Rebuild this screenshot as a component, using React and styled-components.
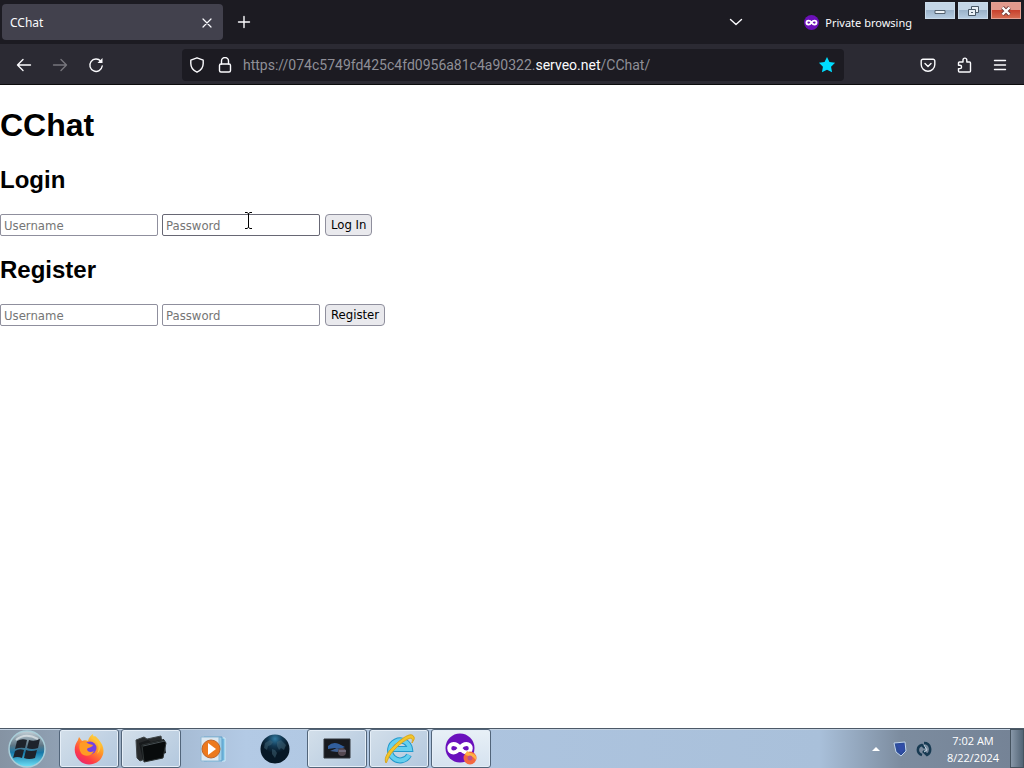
import React from "react";
import styled, { createGlobalStyle, css } from "styled-components";

const chromeFont = '"Noto Sans", "Open Sans", sans-serif';
const formFont = '"DejaVu Sans Condensed", "DejaVu Sans", sans-serif';

const GlobalStyle = createGlobalStyle`
  *, *::before, *::after { box-sizing: border-box; }
  body { margin: 0; background: #fff; }
  button { margin: 0; padding: 0; }
`;

const Screen = styled.div`
  display: flex;
  flex-direction: column;
  min-height: 100vh;
  position: relative;
`;

const TabStrip = styled.header`
  display: flex;
  align-items: center;
  height: 44px;
  padding-left: 2px;
  background: #1c1b22;
  color: #fbfbfe;
  font: 12px/18px ${chromeFont};
`;

const Tab = styled.div`
  display: flex;
  align-items: center;
  justify-content: space-between;
  width: 221px;
  height: 36px;
  padding: 1px 4px 0 8px;
  border-radius: 4px;
  background: #42414d;
`;

const IconButton = styled.button`
  display: flex;
  align-items: center;
  justify-content: center;
  flex: none;
  width: ${(p) => p.$width || 36}px;
  height: 32px;
  border: 0;
  background: none;
  color: ${(p) => (p.disabled ? "#77767d" : "#fbfbfe")};
`;

const Spacer = styled.div`
  flex: 1;
`;

const PrivateBadge = styled.div`
  display: flex;
  align-items: center;
  gap: 6px;
  margin-left: 56px;
  padding: 1px 112px 0 0;
  font-size: 11px;
  white-space: nowrap;
`;

const WindowControls = styled.div`
  position: absolute;
  top: 2px;
  right: 3px;
  display: flex;
  gap: 3px;
`;

const WindowButton = styled.button`
  display: flex;
  align-items: center;
  justify-content: center;
  width: 30px;
  height: 17px;
  border: 1px solid ${(p) => (p.$close ? "#e3a093" : "#c9dbea")};
  background: ${(p) =>
    p.$close
      ? "linear-gradient(#e39a8d 0 45%, #c8422e 50%, #d66a50)"
      : "linear-gradient(#c3d5e6 0 45%, #9bb3ca 50%, #b5cbe0)"};
`;

const Toolbar = styled.nav`
  display: flex;
  align-items: center;
  height: 41px;
  padding: 1px 6px 0;
  border-bottom: 1px solid #0c0c0d;
  background: #2b2a33;
`;

const AddressBar = styled.div`
  display: flex;
  align-items: center;
  flex: 1;
  min-width: 0;
  height: 32px;
  margin: 0 66px 0 68px;
  padding: 0 4px 0 1px;
  border-radius: 4px;
  background: #1c1b22;
`;

const Address = styled.div`
  flex: 1;
  min-width: 0;
  margin-left: 4px;
  overflow: hidden;
  white-space: nowrap;
  color: #8f8f97;
  font: 14px/20px Roboto, ${chromeFont};
`;

const Host = styled.span`
  color: #fbfbfe;
`;

const Page = styled.main`
  flex: 1;
  background: #fff;
  color: #000;
  font-family: "Liberation Sans", Arial, sans-serif;
`;

const Title = styled.h1`
  margin: 22px 0;
  font-size: 32px;
  line-height: 37px;
`;

const Heading = styled.h2`
  margin: 20px 0;
  font-size: 24px;
  line-height: 28px;
`;

const Form = styled.form`
  display: flex;
  gap: 4px;
`;

const controlText = css`
  height: 22px;
  font: 13px/16px ${formFont};
`;

const Field = styled.input`
  ${controlText}
  width: 158px;
  margin: 0;
  padding: 1px 3px;
  border: 1px solid ${(p) => (p.$hovered ? "#676774" : "#8f8f9d")};
  border-radius: 2px;
  background: #fff;
  color: #000;
  &::placeholder { color: #757575; opacity: 1; }
`;

const Submit = styled.button`
  ${controlText}
  margin-left: 1px;
  padding: 0 5px;
  border: 1px solid #8f8f9d;
  border-radius: 4px;
  background: #e9e9ed;
  color: #000;
`;

const TextCursor = styled.svg`
  position: absolute;
  left: 244px;
  top: 212px;
  pointer-events: none;
`;

const Taskbar = styled.footer`
  display: flex;
  align-items: center;
  height: 40px;
  border-top: 1px solid #4c5967;
  background: linear-gradient(90deg, #8593a3 0, #a3b8d0 16%, #b3cae5 24%, #adc4df 45%, #a9c0da 80%, #7c8c9f 88%, #748295);
  box-shadow: inset 0 1px 0 #c3d2e2;
`;

const StartButton = styled.button`
  display: flex;
  justify-content: center;
  width: 54px;
  margin-right: 5px;
  border: 0;
  background: none;
`;

const TaskList = styled.div`
  display: flex;
  gap: 2px;
  height: 39px;
`;

const TaskButton = styled.button`
  display: flex;
  align-items: center;
  justify-content: center;
  width: 60px;
  border: 1px solid transparent;
  border-radius: 3px;
  background: none;
  ${(p) =>
    p.$open &&
    css`
      border-color: #52657a;
      background: ${p.$active ? "linear-gradient(#e8f0f7, #d5e2ef)" : "linear-gradient(135deg, #d3dfea, #b3c8de)"};
      box-shadow: inset 0 0 0 1px #e5eef7;
    `}
`;

const Tray = styled.div`
  display: flex;
  align-items: center;
  height: 39px;
`;

const TrayButton = styled(IconButton)`
  width: 24px;
`;

const Clock = styled.time`
  width: 74px;
  color: #fff;
  text-align: center;
  font: 11px/17px "Open Sans", "Noto Sans", sans-serif;
`;

const ShowDesktop = styled.button`
  width: 14px;
  height: 39px;
  border: 1px solid #45535f;
  background: linear-gradient(90deg, #8797a8, #526475);
`;

const Icon = ({ size = 16, width = 1.4, children }) => (
  <svg width={size} height={size} viewBox="0 0 16 16" fill="none" stroke="currentColor" strokeWidth={width} strokeLinecap="round" strokeLinejoin="round" aria-hidden="true">
    {children}
  </svg>
);

const Mask = ({ size }) => (
  <svg width={size} height={size} viewBox="0 0 32 32" aria-hidden="true">
    <circle cx="16" cy="16" r="16" fill="#6b10b8" />
    <path fill="none" stroke="#fff" strokeWidth="4" d="M16 16c-2-3-4-4-6.500-4a4 4 0 0 0 0 8.500c2.500 0 4.500-1.500 6.500-4.500 2-3 4-4 6.500-4a4 4 0 0 1 0 8.500c-2.500 0-4.500-1.500-6.500-4.500z" />
  </svg>
);

const StartIcon = () => (
  <svg width="40" height="38" viewBox="0 0 40 38" aria-hidden="true">
    <defs>
      <linearGradient id="orb" x1="0" y1="0" x2="0" y2="1">
        <stop offset="0" stopColor="#c5d1d8" /><stop offset=".4" stopColor="#5d7584" />
        <stop offset=".6" stopColor="#1678a8" /><stop offset="1" stopColor="#6fe2f8" />
      </linearGradient>
    </defs>
    <circle cx="20" cy="19" r="18" fill="url(#orb)" stroke="#a9ced9" strokeWidth="1.500" />
    <path fill="#1d222b" d="M10 11q5-3 10-1l-2 8q-5-1-10 1zM22 10q5 2 11-1l-2 9q-6 2-11 0zM8 21q4-3 9-1l-2 8q-5-2-9 0zM19 20q5 2 11 0l-2 8q-6 2-11 0z" />
    <path d="M9 10Q18 2 31 9" stroke="#e4eaec" strokeWidth="2" fill="none" opacity=".7" />
  </svg>
);

const FirefoxIcon = () => (
  <svg width="32" height="32" viewBox="0 0 32 32" aria-hidden="true">
    <defs>
      <linearGradient id="fire" x1=".9" y1="0" x2=".2" y2="1">
        <stop offset="0" stopColor="#fff04a" /><stop offset=".4" stopColor="#ff9a27" />
        <stop offset=".75" stopColor="#ff3c45" /><stop offset="1" stopColor="#e52378" />
      </linearGradient>
    </defs>
    <path fill="url(#fire)" d="M5 7l1-3 3 4c2-1 4-1 6 0 1-4 3-6 5-7 0 3 3 4 4 7l1-2c7 7 7 15 2 21-6 6-16 6-21 0C1 22 0 14 5 7z" />
    <circle cx="17" cy="15" r="6.500" fill="#7543e3" />
    <path fill="#ff9b24" d="M7 10c3-2 6-1 9 1l4 1c-1 3-5 2-6 4 0 3 4 4 7 2-3 6-10 6-13 2-2-3-2-7-1-10z" />
    <path fill="#ffc53a" d="M18 5c6 3 10 8 6 16 6-5 4-14-2-18z" />
  </svg>
);

const FoldersIcon = () => (
  <svg width="34" height="32" viewBox="0 0 34 32" aria-hidden="true">
    <path fill="#272a2c" stroke="#3f4547" d="M2 7l8-3 3 2 14-3 2 16-23 9-3-3z" />
    <path fill="#171a1c" d="M5 10l9-3 3 2 13-3 2 14-23 7z" />
    <path fill="#080b0c" stroke="#2d3334" d="M8 12l22-5 2 3-3 15-19 4z" />
    <path stroke="#485054" d="M9 13l22-5" />
  </svg>
);

const MediaIcon = () => (
  <svg width="28" height="28" viewBox="0 0 28 28" aria-hidden="true">
    <path fill="#71b7dd" stroke="#d0eefa" d="M8 3h18v23H8z" />
    <path fill="#9fcfe8" stroke="#5e9fc9" d="M5 2h18v24H5z" />
    <path fill="#dce8f1" stroke="#8fb9d5" d="M2 2h18v24H2z" />
    <circle cx="12" cy="14" r="9" fill="#ec791d" stroke="#bd652b" />
    <path d="M9 8l8 6-8 6z" fill="#fff" />
  </svg>
);

const GlobeIcon = () => (
  <svg width="30" height="30" viewBox="0 0 30 30" aria-hidden="true">
    <defs><radialGradient id="globe" cx=".5" cy=".15"><stop stopColor="#2f79a0" /><stop offset=".5" stopColor="#123852" /><stop offset="1" stopColor="#071826" /></radialGradient></defs>
    <circle cx="15" cy="15" r="14.500" fill="url(#globe)" />
    <path fill="#426578" opacity=".5" d="M5 9l5-3 3 2-2 3-3 1-1 4-3-2zm7 6l3 1 2 3-2 5-3-4zm5-7l4-2 5 5-2 5-3-2-2 2-2-4z" />
  </svg>
);

const MonitorIcon = () => (
  <svg width="28" height="24" viewBox="0 0 28 24" aria-hidden="true">
    <path fill="#17191e" stroke="#30343b" d="M1 2h26v19H1z" />
    <path fill="#315e9d" d="M5 9q5-5 11-2l6 3q-5 3-10 1l-7 1z" />
    <path fill="#3f5f90" d="M7 14l7-3 4 3-4 1z" />
    <circle cx="19" cy="15" r="4" fill="#554952" /><path d="M16 14h7" stroke="#8c89a0" />
  </svg>
);

const ExplorerIcon = () => (
  <svg width="32" height="32" viewBox="0 0 32 32" fill="none" aria-hidden="true">
    <path d="M26 22a10 10 0 1 1 1-6H10" stroke="#2299cc" strokeWidth="6" />
    <path d="M26 22a10 10 0 1 1 1-6H10" stroke="#66cfee" strokeWidth="4" />
    <path d="M3 30C0 25 6 17 14 10S29-1 31 4c1 2-1 4-2 6 1-4 0-6-4-4-7 3-18 14-20 20-1 2-1 3-2 4z" fill="#f2c62b" stroke="#d9a51f" />
  </svg>
);

const PrivateIcon = () => (
  <svg width="32" height="32" viewBox="0 0 32 32" aria-hidden="true">
    <circle cx="15" cy="15" r="14.500" fill="#6a10bd" />
    <path fill="none" stroke="#fff" strokeWidth="4" d="M15 15c-2-3-4-4-6.500-4a4 4 0 0 0 0 8.500c2.500 0 4.500-1.500 6.500-4.500 2-3 4-4 6.500-4a4 4 0 0 1 0 8.500c-2.500 0-4.500-1.500-6.500-4.500z" />
    <circle cx="25" cy="25" r="6.500" fill="#f46840" /><path d="M20 22l2-4 3 2c5 0 7 4 6 7l-3-3z" fill="#ffb340" /><circle cx="25" cy="25" r="2.500" fill="#bd518b" />
  </svg>
);

const tasks = [
  { name: "Firefox", icon: FirefoxIcon, open: true },
  { name: "Folders", icon: FoldersIcon, open: true },
  { name: "Media player", icon: MediaIcon },
  { name: "Globe", icon: GlobeIcon },
  { name: "Monitor", icon: MonitorIcon, open: true },
  { name: "Internet Explorer", icon: ExplorerIcon, open: true },
  { name: "Firefox private browsing", icon: PrivateIcon, open: true, active: true },
];

const Credentials = ({ action, hovered }) => (
  <Form onSubmit={(e) => e.preventDefault()}>
    <Field type="text" placeholder="Username" aria-label="Username" />
    <Field type="password" placeholder="Password" aria-label="Password" $hovered={hovered} />
    <Submit type="submit">{action}</Submit>
  </Form>
);

export default function App() {
  return (
    <Screen>
      <GlobalStyle />
      <TabStrip>
        <Tab>
          <span>CChat</span>
          <IconButton $width={24} aria-label="Close tab"><Icon width={1.2}><path d="M4 4l8 8M12 4l-8 8" /></Icon></IconButton>
        </Tab>
        <IconButton $width={42} aria-label="New tab"><Icon><path d="M8 2.500v11M2.500 8h11" /></Icon></IconButton>
        <Spacer />
        <IconButton $width={24} aria-label="List all tabs"><Icon><path d="M2.500 5.500L8 10.500l5.500-5" /></Icon></IconButton>
        <PrivateBadge><Mask size={15} /><span>Private browsing</span></PrivateBadge>
        <WindowControls>
          <WindowButton aria-label="Minimize">
            <svg width="14" height="9" viewBox="0 0 14 9"><path fill="#eef4f8" stroke="#53616e" d="M2 4.500h10v3H2z" /></svg>
          </WindowButton>
          <WindowButton aria-label="Restore">
            <svg width="14" height="12" viewBox="0 0 14 12" fill="#e9f0f6" stroke="#495968"><path d="M5.500 1.500h7v6h-7z" /><path d="M2.500 4.500h7v6h-7z" /><path d="M5 7.500h2" /></svg>
          </WindowButton>
          <WindowButton $close aria-label="Close window">
            <svg width="14" height="12" viewBox="0 0 14 12"><path d="M3.500 2.500l7 7m0-7l-7 7" stroke="#6f3b39" strokeWidth="4" /><path d="M3.500 2.500l7 7m0-7l-7 7" stroke="#fff" strokeWidth="2.400" /></svg>
          </WindowButton>
        </WindowControls>
      </TabStrip>
      <Toolbar>
        <IconButton aria-label="Back"><Icon><path d="M14.500 8H1.500M7 2.500L1.500 8 7 13.500" /></Icon></IconButton>
        <IconButton aria-label="Forward" disabled><Icon><path d="M1.500 8h13M9 2.500L14.500 8 9 13.500" /></Icon></IconButton>
        <IconButton aria-label="Reload"><Icon><path d="M12.800 4.200A6.200 6.200 0 1 0 14.200 9" /><path d="M14.500 1v5h-5z" fill="currentColor" stroke="none" /></Icon></IconButton>
        <AddressBar>
          <IconButton $width={28} aria-label="Tracking protection"><Icon><path d="M8 .8l6.200 2.400v3.300c0 3.800-2 6.800-6.200 8.700-4.200-1.900-6.200-4.900-6.200-8.700V3.200z" /></Icon></IconButton>
          <IconButton $width={28} aria-label="Connection security"><Icon><rect x="2.500" y="7" width="11" height="8" rx="1.500" /><path d="M4.500 7V4a3.500 3.500 0 0 1 7 0v3" /></Icon></IconButton>
          <Address>https://074c5749fd425c4fd0956a81c4a90322.<Host>serveo.net</Host>/CChat/</Address>
          <IconButton $width={26} aria-label="Bookmark">
            <svg width="18" height="18" viewBox="0 0 16 16"><path fill="#0df" d="M8 .8l2.200 4.500 5 .7-3.600 3.500.9 5L8 12.200l-4.500 2.300.9-5L.8 6l5-.7z" /></svg>
          </IconButton>
        </AddressBar>
        <IconButton aria-label="Save to Pocket"><Icon><path d="M1.200 4A1.700 1.700 0 0 1 3 2.300h10A1.700 1.700 0 0 1 14.800 4v3.500a6.800 6.800 0 0 1-13.600 0z" /><path d="M5 6.500l3 3 3-3" /></Icon></IconButton>
        <IconButton aria-label="Extensions"><Icon><path d="M3.500 15h10a1 1 0 0 0 1-1V6a1 1 0 0 0-1-1h-2.700V3a1.900 1.900 0 0 0-3.800 0v2H3.500a1 1 0 0 0-1 1v2.200h1.400a1.700 1.700 0 0 1 0 3.400H2.500V14a1 1 0 0 0 1 1z" /></Icon></IconButton>
        <IconButton aria-label="Menu"><Icon><path d="M2.500 3.500h11M2.500 8h11M2.500 12.500h11" /></Icon></IconButton>
      </Toolbar>
      <Page>
        <Title>CChat</Title>
        <Heading>Login</Heading>
        <Credentials action="Log In" hovered />
        <Heading>Register</Heading>
        <Credentials action="Register" />
      </Page>
      <TextCursor width="9" height="17" viewBox="0 0 9 17" fill="none" stroke="#000" aria-hidden="true">
        <path d="M1 .5h2l1.500 1L6 .5h2M4.500 1.500v14M1 16.500h2l1.500-1 1.500 1h2" />
      </TextCursor>
      <Taskbar>
        <StartButton aria-label="Start"><StartIcon /></StartButton>
        <TaskList>
          {tasks.map(({ name, icon: Glyph, open, active }) => (
            <TaskButton key={name} aria-label={name} $open={open} $active={active}><Glyph /></TaskButton>
          ))}
        </TaskList>
        <Spacer />
        <Tray>
          <TrayButton aria-label="Show hidden icons"><svg width="8" height="5"><path d="M0 5l4-4 4 4z" fill="#fff" /></svg></TrayButton>
          <TrayButton aria-label="Security">
            <svg width="16" height="16" viewBox="0 0 16 16"><path d="M2 2l11-1 1 9-5 5-5-4z" fill="#2d4d9b" stroke="#c2d5ea" /><path d="M5 4l7-1v6l-3 3z" fill="#314da8" /></svg>
          </TrayButton>
          <TrayButton aria-label="Sync">
            <svg width="16" height="16" viewBox="0 0 16 16" fill="none" stroke="#173a52" strokeWidth="2.500"><path d="M6 14C0 12 1 5 6 4l3 3M8 2c7 0 8 9 3 12l-4-4" /><path d="M8 4l3 5-3 2" stroke="#bed5e3" strokeWidth="1" /></svg>
          </TrayButton>
          <Clock dateTime="2024-08-22T07:02">7:02 AM<br />8/22/2024</Clock>
          <ShowDesktop aria-label="Show desktop" />
        </Tray>
      </Taskbar>
    </Screen>
  );
}
